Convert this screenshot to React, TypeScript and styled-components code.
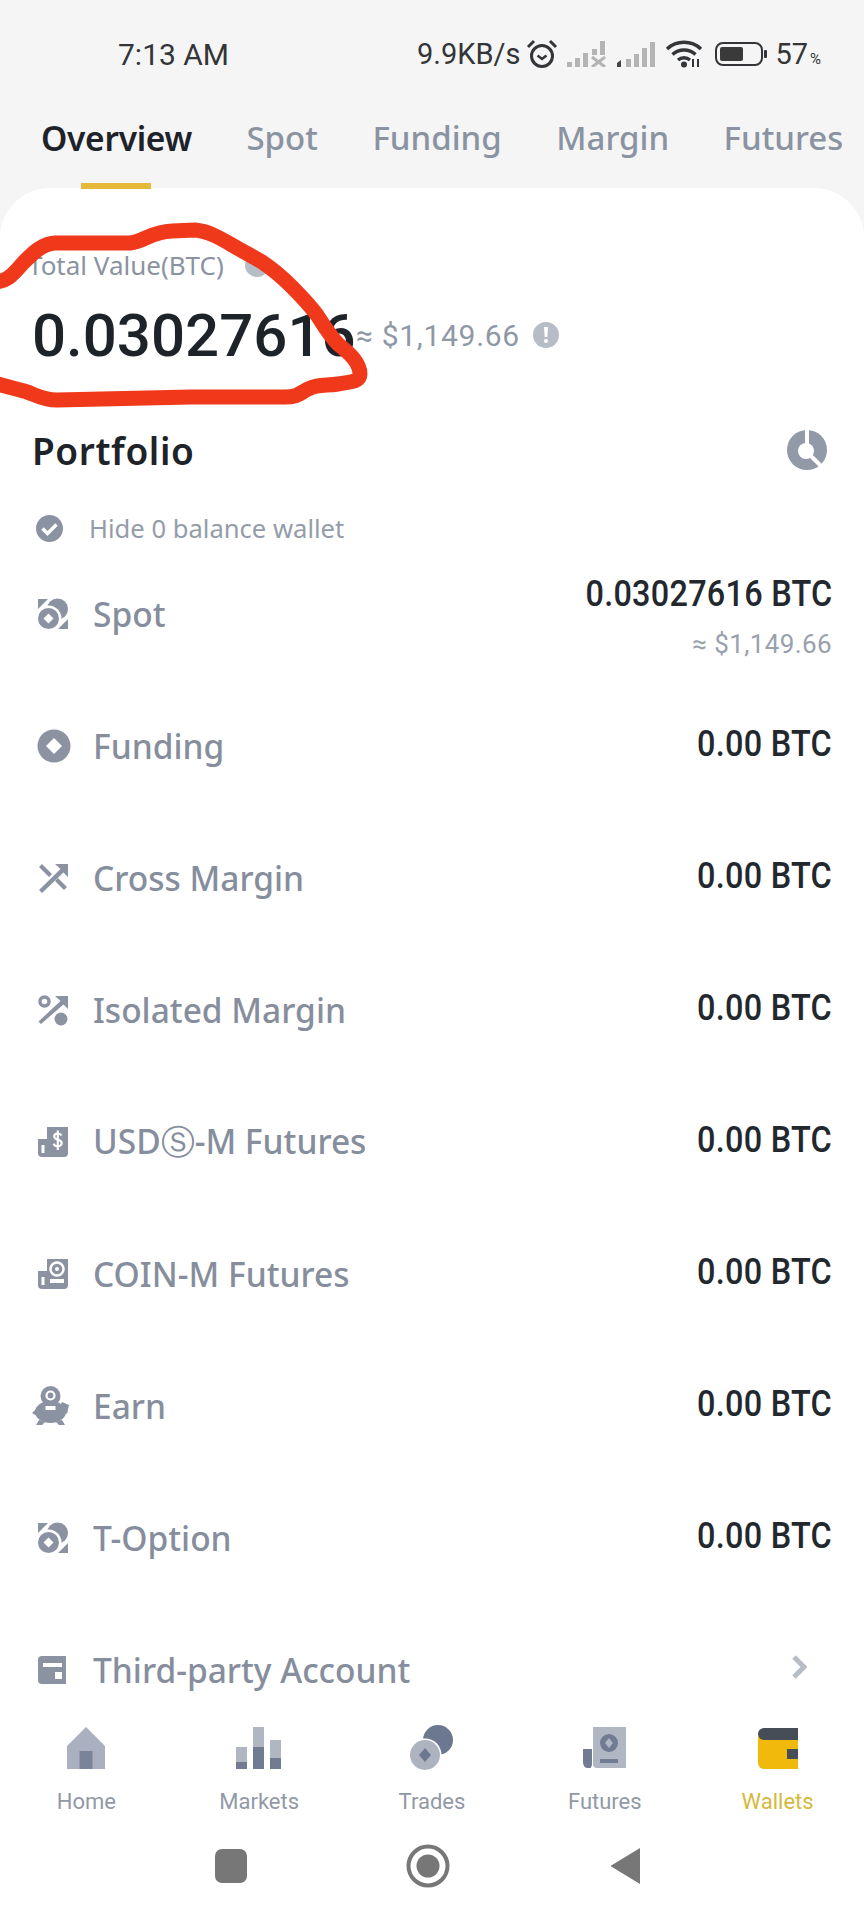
import React from "react";
import styled, { createGlobalStyle } from "styled-components";

const Global = createGlobalStyle`
  html, body { margin: 0; padding: 0; background: #f5f5f5; }
  * { box-sizing: border-box; }
`;

const Page = styled.div`
  position: relative;
  width: 864px;
  height: 1920px;
  display: flex;
  flex-direction: column;
  background: #f5f5f5;
  overflow: hidden;
  font-family: "Noto Sans", sans-serif;
`;

const StatusBar = styled.div`
  height: 108px;
  flex: none;
  display: flex;
  align-items: center;
  justify-content: space-between;
  padding: 0 43px 0 118px;
  font-family: Roboto, sans-serif;
  font-size: 29px;
  color: #333539;
`;

const StatusTime = styled.span`
  font-size: 30px;
`;

const StatusRight = styled.div`
  display: flex;
  align-items: center;
  width: 404px;
`;

const Speed = styled.span`
  width: 117px;
  white-space: nowrap;
`;

const Percent = styled.span`
  margin-left: 8px;
  white-space: nowrap;
`;

const PercentSign = styled.span`
  font-size: 15px;
  margin-left: 2px;
`;

const Tabs = styled.div`
  height: 80px;
  flex: none;
  display: flex;
  gap: 54.5px;
  padding: 6px 0 0 41px;
  white-space: nowrap;
`;

const Tab = styled.div<{ $active?: boolean }>`
  position: relative;
  font-size: ${(p) => (p.$active ? "33.5px" : "33px")};
  line-height: 48px;
  font-weight: ${(p) => (p.$active ? 600 : 500)};
  letter-spacing: ${(p) => (p.$active ? "-0.3px" : "0")};
  color: ${(p) => (p.$active ? "#1e2329" : "#8a93a1")};
  ${(p) =>
    p.$active &&
    `&::after {
      content: "";
      position: absolute;
      left: 40px;
      width: 70px;
      top: 69px;
      height: 6px;
      background: #e6b93a;
      z-index: 2;
    }`}
`;

const Panel = styled.div`
  flex: 1;
  min-height: 0;
  background: #fff;
  border-radius: 50px 50px 0 0;
  overflow: hidden;
  padding-top: 57px;
`;

const TotalLabel = styled.div`
  height: 40px;
  padding-left: 28px;
  display: flex;
  align-items: center;
  gap: 21px;
  font-size: 26px;
  color: #8a93a1;
  white-space: nowrap;
`;

const ValueLine = styled.div`
  margin-top: 15px;
  height: 70px;
  padding-left: 32px;
  display: flex;
  align-items: center;
  font-family: Roboto, sans-serif;
`;

const TotalValue = styled.span`
  font-size: 60px;
  font-weight: 500;
  color: #1e2329;
  width: 324px;
  white-space: nowrap;
  overflow: hidden;
`;

const Approx = styled.span`
  font-size: 30px;
  letter-spacing: 0.7px;
  color: #8f98a5;
  width: 177px;
  white-space: nowrap;
`;

const PortfolioHeader = styled.div`
  margin-top: 50px;
  height: 60px;
  padding: 0 37px 0 32px;
  display: flex;
  align-items: center;
  justify-content: space-between;
`;

const PortfolioTitle = styled.span`
  font-size: 37px;
  font-weight: 600;
  color: #1e2329;
  letter-spacing: 0.6px;
`;

const HideRow = styled.div`
  margin-top: 28px;
  height: 40px;
  padding-left: 36px;
  display: flex;
  align-items: center;
  gap: 26px;
  font-size: 25.6px;
  color: #949ca9;
`;

const List = styled.div`
  display: flex;
  flex-direction: column;
`;

const Row = styled.div`
  flex: none;
  height: 132px;
  padding: 0 32px 0 32px;
  display: flex;
  align-items: center;
`;

const RowIconBox = styled.div`
  width: 42px;
  height: 40px;
  flex: none;
  display: flex;
  align-items: center;
  justify-content: flex-start;
  color: #8b93a2;
  margin-left: 5px;
  margin-right: 14px;
`;

const RowLabel = styled.div`
  flex: 1;
  font-size: 33.5px;
  font-weight: 500;
  color: #868e9d;
  white-space: nowrap;
`;

const RowValues = styled.div<{ $sub?: boolean }>`
  display: flex;
  flex-direction: column;
  align-items: flex-end;
  font-family: Roboto, sans-serif;
  gap: 14px;
  padding-top: ${(p) => (p.$sub ? "7px" : "0")};
`;

const RowValue = styled.div`
  font-size: 36px;
  line-height: 42px;
  font-weight: 500;
  color: #23272e;
  letter-spacing: 0.3px;
  white-space: nowrap;
  margin-top: -4px;
  transform: scaleX(0.9);
  transform-origin: right center;
`;

const RowSub = styled.div`
  font-size: 26px;
  line-height: 30px;
  letter-spacing: 0.4px;
  color: #99a1ad;
  white-space: nowrap;
`;

const Chevron = styled.svg`
  margin-right: 25px;
  margin-top: -6px;
`;

const BottomNav = styled.div`
  flex: none;
  height: 120px;
  background: #fff;
  display: grid;
  grid-template-columns: repeat(5, 1fr);
  padding-top: 16px;
`;

const NavItem = styled.div`
  display: flex;
  flex-direction: column;
  align-items: center;
`;

const NavIconBox = styled.div`
  height: 44px;
  display: flex;
  align-items: center;
  justify-content: center;
`;

const NavLabel = styled.span<{ $active?: boolean }>`
  margin-top: 18px;
  font-family: Roboto, sans-serif;
  font-size: 22px;
  line-height: 28px;
  color: ${(p) => (p.$active ? "#d4b93c" : "#9299a6")};
`;

const SystemBar = styled.div`
  flex: none;
  height: 90px;
  background: #fff;
  display: grid;
  grid-template-columns: repeat(3, 64px);
  column-gap: 133px;
  align-items: center;
  padding: 0 0 18px 199px;
`;

const SystemSlot = styled.div`
  display: flex;
  justify-content: center;
  align-items: center;
`;

const RecentKey = styled.div`
  width: 32px;
  height: 34px;
  border-radius: 7px;
  background: #777;
`;

const Scribble = styled.svg`
  position: absolute;
  left: 0;
  top: 0;
  pointer-events: none;
`;

const Gray = "#8b93a2";

const SpotIcon = () => (
  <svg width="32" height="32" viewBox="0 0 32 32">
    <path d="M1 1h10L1 11zM31 31H21l10-10z" fill="currentColor" />
    <circle cx="20.500" cy="11" r="10.500" fill="currentColor" />
    <circle cx="11.500" cy="20.500" r="13" fill="#fff" />
    <circle cx="11.500" cy="20.500" r="10.500" fill="currentColor" />
    <path d="M11.500 15.500l5 5-5 5-5-5z" fill="#fff" />
  </svg>
);

const FundingIcon = () => (
  <svg width="34" height="34" viewBox="0 0 34 34">
    <circle cx="17" cy="17" r="16.500" fill="currentColor" />
    <path d="M17 9l8 8-8 8-8-8z" fill="#fff" />
  </svg>
);

const CrossIcon = () => (
  <svg width="32" height="32" viewBox="0 0 32 32" fill="currentColor">
    <path d="M18 2h13v13l-4.500-4.500L5 31l-3-3L23.500 7z" />
    <path d="M2 5l3-3 10 10-3 3zM18 19l3-3 9 9-3 3z" />
  </svg>
);

const IsolatedIcon = () => (
  <svg width="32" height="32" viewBox="0 0 32 32" fill="currentColor">
    <path d="M18 2h13v13l-4.500-4.500L4 30l-2.500-2.500L23.500 7z" />
    <circle cx="7.500" cy="7.500" r="4.500" fill="none" stroke="currentColor" strokeWidth="3.500" />
    <circle cx="24" cy="25" r="6.500" />
  </svg>
);

const UsdIcon = () => (
  <svg width="32" height="32" viewBox="0 0 32 32">
    <path d="M10 1h21v26a4 4 0 0 1-4 4H5a4 4 0 0 1-4-4V13h9z" fill="currentColor" />
    <path d="M4.500 19h3v8h-3z" fill="#fff" />
    <path d="M24.500 9.500c-.8-1.500-2.200-2-3.700-2s-3.600.8-3.600 3c0 4.200 7.500 2.300 7.500 6.500 0 2-1.900 3.300-4 3.300-1.900 0-3.400-.8-4.200-2.500M20.800 4.500v19.500" stroke="#fff" strokeWidth="2.200" fill="none" />
  </svg>
);

const CoinIcon = () => (
  <svg width="32" height="32" viewBox="0 0 32 32">
    <path d="M10 1h21v26a4 4 0 0 1-4 4H5a4 4 0 0 1-4-4V13h9z" fill="currentColor" />
    <path d="M4.500 19h3v8h-3zM13 21h14v4H13z" fill="#fff" />
    <circle cx="20" cy="11" r="6.500" fill="none" stroke="#fff" strokeWidth="2.500" />
    <circle cx="20" cy="11" r="2" fill="#fff" />
  </svg>
);

const EarnIcon = () => (
  <svg width="38" height="40" viewBox="0 0 38 40" style={{ marginLeft: -5, flex: "none" }}>
    <circle cx="18.500" cy="10" r="10" fill="currentColor" />
    <circle cx="18.500" cy="9.500" r="4" fill="none" stroke="#fff" strokeWidth="2.200" />
    <ellipse cx="18.500" cy="26" rx="15.500" ry="11" fill="currentColor" />
    <path d="M5 22L0 27l5 3zM30 16l7 3-2 9-8-6zM7 34l-3 5h6l3-3zM30 34l3 5h-6l-3-3z" fill="currentColor" />
    <path d="M13.500 20h10v4h-10z" fill="#fff" />
  </svg>
);

const ThirdPartyIcon = () => (
  <svg width="30" height="30" viewBox="0 0 30 30">
    <path d="M5 1h24v28H5a4 4 0 0 1-4-4V5a4 4 0 0 1 4-4z" fill="currentColor" />
    <path d="M6 8h19v4H6zM18 17h7v7h-7z" fill="#fff" />
  </svg>
);

const rows: { label: string; icon: React.ReactNode; value: string; sub?: string }[] = [
  { label: "Spot", icon: <SpotIcon />, value: "0.03027616 BTC", sub: "≈ $1,149.66" },
  { label: "Funding", icon: <FundingIcon />, value: "0.00 BTC" },
  { label: "Cross Margin", icon: <CrossIcon />, value: "0.00 BTC" },
  { label: "Isolated Margin", icon: <IsolatedIcon />, value: "0.00 BTC" },
  { label: "USDⓈ-M Futures", icon: <UsdIcon />, value: "0.00 BTC" },
  { label: "COIN-M Futures", icon: <CoinIcon />, value: "0.00 BTC" },
  { label: "Earn", icon: <EarnIcon />, value: "0.00 BTC" },
  { label: "T-Option", icon: <SpotIcon />, value: "0.00 BTC" },
];

const HomeIcon = () => (
  <svg width="40" height="42" viewBox="0 0 40 42">
    <path d="M20 0l19 19v23H1V19z" fill="#aab0bf" />
    <path d="M13.500 24h13v18h-13z" fill="#7a8499" />
  </svg>
);

const MarketsIcon = () => (
  <svg width="46" height="42" viewBox="0 0 46 42">
    <path d="M0 20h11v22H0zM17 0h11v42H17zM34 13h11v29H34z" fill="#b1b6c3" />
    <path d="M0 35h11v7H0zM17 20h11v22H17zM34 31h11v11H34z" fill="#717b91" />
  </svg>
);

const TradesIcon = () => (
  <svg width="44" height="46" viewBox="0 0 44 46">
    <circle cx="28" cy="15" r="15" fill="#6c7790" />
    <circle cx="15" cy="30" r="16.500" fill="#fff" />
    <circle cx="15" cy="30" r="15" fill="#aeb3c0" />
    <path d="M15 23l6 7-6 7-6-7z" fill="#6c7790" />
  </svg>
);

const FuturesIcon = () => (
  <svg width="44" height="42" viewBox="0 0 44 42">
    <path d="M10 0h33v41H14a4 4 0 0 1-4-4z" fill="#b1b6c3" />
    <path d="M0 22h9v15c0 2-1 4-2 4H4c-2 0-4-3-4-6z" fill="#717b91" />
    <circle cx="26" cy="16" r="9" fill="#717b91" />
    <path d="M26 11l4 5-4 5-4-5z" fill="#b1b6c3" />
    <path d="M17 32h18v4H17z" fill="#717b91" />
  </svg>
);

const WalletsIcon = () => (
  <svg width="40" height="41" viewBox="0 0 40 41">
    <path d="M0 8h40v33H6a6 6 0 0 1-6-6z" fill="#f0b90b" />
    <path d="M6 0h34v12H6a6 6 0 0 1 0-12z" fill="#474d57" />
    <path d="M29 21h11v10H29z" fill="#474d57" />
  </svg>
);

const tabsNav: { label: string; icon: React.ReactNode; active?: boolean }[] = [
  { label: "Home", icon: <HomeIcon /> },
  { label: "Markets", icon: <MarketsIcon /> },
  { label: "Trades", icon: <TradesIcon /> },
  { label: "Futures", icon: <FuturesIcon /> },
  { label: "Wallets", icon: <WalletsIcon />, active: true },
];

const Alarm = () => (
  <svg width="32" height="32" viewBox="0 0 32 32" style={{ marginRight: 9, flex: "none" }}>
    <circle cx="16" cy="18" r="10.500" fill="none" stroke="#333539" strokeWidth="3" />
    <path d="M11.500 17.500l4.500 3.500 4.500-3.500" fill="none" stroke="#333539" strokeWidth="2.500" />
    <path d="M2 9l6-6M30 9l-6-6" stroke="#333539" strokeWidth="3" />
  </svg>
);

const SignalOff = () => (
  <svg width="40" height="26" viewBox="0 0 40 26" style={{ marginRight: 10, flex: "none" }} fill="#b4b4b4">
    <path d="M0 21h5v5H0zM8 17h5v9H8zM16 12h5v14h-5zM25 8h5v6h-5zM33 0h5v14h-5z" />
    <path d="M25 16l13 10M38 16L25 26" stroke="#b4b4b4" strokeWidth="3" />
  </svg>
);

const Signal = () => (
  <svg width="38" height="26" viewBox="0 0 38 26" style={{ marginRight: 10, flex: "none" }}>
    <path d="M0 22l4-3v7H0z" fill="#444" />
    <path d="M9 18h5v8H9zM17 13h5v13h-5zM25 7h5v19h-5zM33 1h5v25h-5z" fill="#b4b4b4" />
  </svg>
);

const Wifi = () => (
  <svg width="38" height="28" viewBox="0 0 38 28" style={{ marginRight: 12, flex: "none" }}>
    <path d="M2 9c9.500-9 24.500-9 34 0M7.500 14.500c6.500-6 16.500-6 23 0M13 20c3.500-3 8.500-3 12 0" fill="none" stroke="#333539" strokeWidth="3.400" />
    <circle cx="19" cy="24.500" r="3" fill="#333539" />
    <path d="M28 19v8M33 19v8" stroke="#333539" strokeWidth="2" />
  </svg>
);

const Battery = () => (
  <svg width="52" height="24" viewBox="0 0 52 24" style={{ flex: "none" }}>
    <rect x="1" y="1" width="46" height="22" rx="7" fill="none" stroke="#333539" strokeWidth="2" />
    <rect x="5" y="5" width="23" height="14" rx="2" fill="#3a3a3a" />
    <rect x="49" y="8" width="3" height="8" rx="1" fill="#333539" />
  </svg>
);

export default function App() {
  return (
    <Page>
      <Global />
      <StatusBar>
        <StatusTime>7:13 AM</StatusTime>
        <StatusRight>
          <Speed>9.9KB/s</Speed>
          <Alarm />
          <SignalOff />
          <Signal />
          <Wifi />
          <Battery />
          <Percent>
            57<PercentSign>%</PercentSign>
          </Percent>
        </StatusRight>
      </StatusBar>
      <Tabs>
        <Tab $active>Overview</Tab>
        <Tab>Spot</Tab>
        <Tab>Funding</Tab>
        <Tab>Margin</Tab>
        <Tab>Futures</Tab>
      </Tabs>
      <Panel>
        <TotalLabel>
          Total Value(BTC)
          <svg width="24" height="24" viewBox="0 0 24 24">
            <circle cx="12" cy="12" r="12" fill="#b7bdc6" />
          </svg>
        </TotalLabel>
        <ValueLine>
          <TotalValue>0.03027616</TotalValue>
          <Approx>≈ $1,149.66</Approx>
          <svg width="26" height="26" viewBox="0 0 26 26">
            <circle cx="13" cy="13" r="13" fill="#b7bdc6" />
            <path d="M11 5h4l-.7 10h-2.600z" fill="#fff" />
            <circle cx="13" cy="19" r="2" fill="#fff" />
          </svg>
        </ValueLine>
        <PortfolioHeader>
          <PortfolioTitle>Portfolio</PortfolioTitle>
          <svg width="40" height="40" viewBox="0 0 40 40">
            <circle cx="20" cy="20" r="20" fill="#929aa8" />
            <circle cx="19" cy="21" r="8" fill="#fff" />
            <path d="M20 0v14M24 26l12 12" stroke="#fff" strokeWidth="4" />
          </svg>
        </PortfolioHeader>
        <HideRow>
          <svg width="27" height="27" viewBox="0 0 27 27">
            <circle cx="13.500" cy="13.500" r="13.500" fill={Gray} />
            <path d="M6.500 13.500l5 5 9-9" fill="none" stroke="#fff" strokeWidth="3.500" />
          </svg>
          Hide 0 balance wallet
        </HideRow>
        <List>
          {rows.map((r) => (
            <Row key={r.label}>
              <RowIconBox>{r.icon}</RowIconBox>
              <RowLabel>{r.label}</RowLabel>
              <RowValues $sub={!!r.sub}>
                <RowValue>{r.value}</RowValue>
                {r.sub && <RowSub>{r.sub}</RowSub>}
              </RowValues>
            </Row>
          ))}
          <Row>
            <RowIconBox>
              <ThirdPartyIcon />
            </RowIconBox>
            <RowLabel>Third-party Account</RowLabel>
            <Chevron width="16" height="24" viewBox="0 0 16 24">
              <path d="M3 2l10 10L3 22" fill="none" stroke="#b7bdc6" strokeWidth="5" />
            </Chevron>
          </Row>
        </List>
      </Panel>
      <BottomNav>
        {tabsNav.map((t) => (
          <NavItem key={t.label}>
            <NavIconBox>{t.icon}</NavIconBox>
            <NavLabel $active={t.active}>{t.label}</NavLabel>
          </NavItem>
        ))}
      </BottomNav>
      <SystemBar>
        <SystemSlot>
          <RecentKey />
        </SystemSlot>
        <SystemSlot>
          <svg width="44" height="44" viewBox="0 0 44 44">
            <circle cx="22" cy="22" r="19.500" fill="none" stroke="#777" strokeWidth="4" />
            <circle cx="22" cy="22" r="11.500" fill="#777" />
          </svg>
        </SystemSlot>
        <SystemSlot>
          <svg width="30" height="36" viewBox="0 0 30 36">
            <path d="M30 0v36L2 19a1 1 0 0 1 0-2z" fill="#777" />
          </svg>
        </SystemSlot>
      </SystemBar>
      <Scribble width="380" height="420" viewBox="0 0 380 420">
        <path
          d="M-6 282C6 282 12 276 23 263C34 252 42 244 55 243L130 243C146 241 150 232 172 231L195 230C208 231 220 238 232 245C244 252 252 256 262 262C274 270 282 277 291 286C300 295 308 303 317 315C324 326 330 336 338 344C348 352 360 362 360 374C360 382 350 382 338 384C326 386 318 384 308 389C300 393 298 397 285 397L191 397L57 400C40 400 32 392 20 390L-6 383"
          fill="none"
          stroke="#f0391b"
          strokeWidth="15"
          strokeLinecap="round"
          strokeLinejoin="round"
        />
      </Scribble>
    </Page>
  );
}
